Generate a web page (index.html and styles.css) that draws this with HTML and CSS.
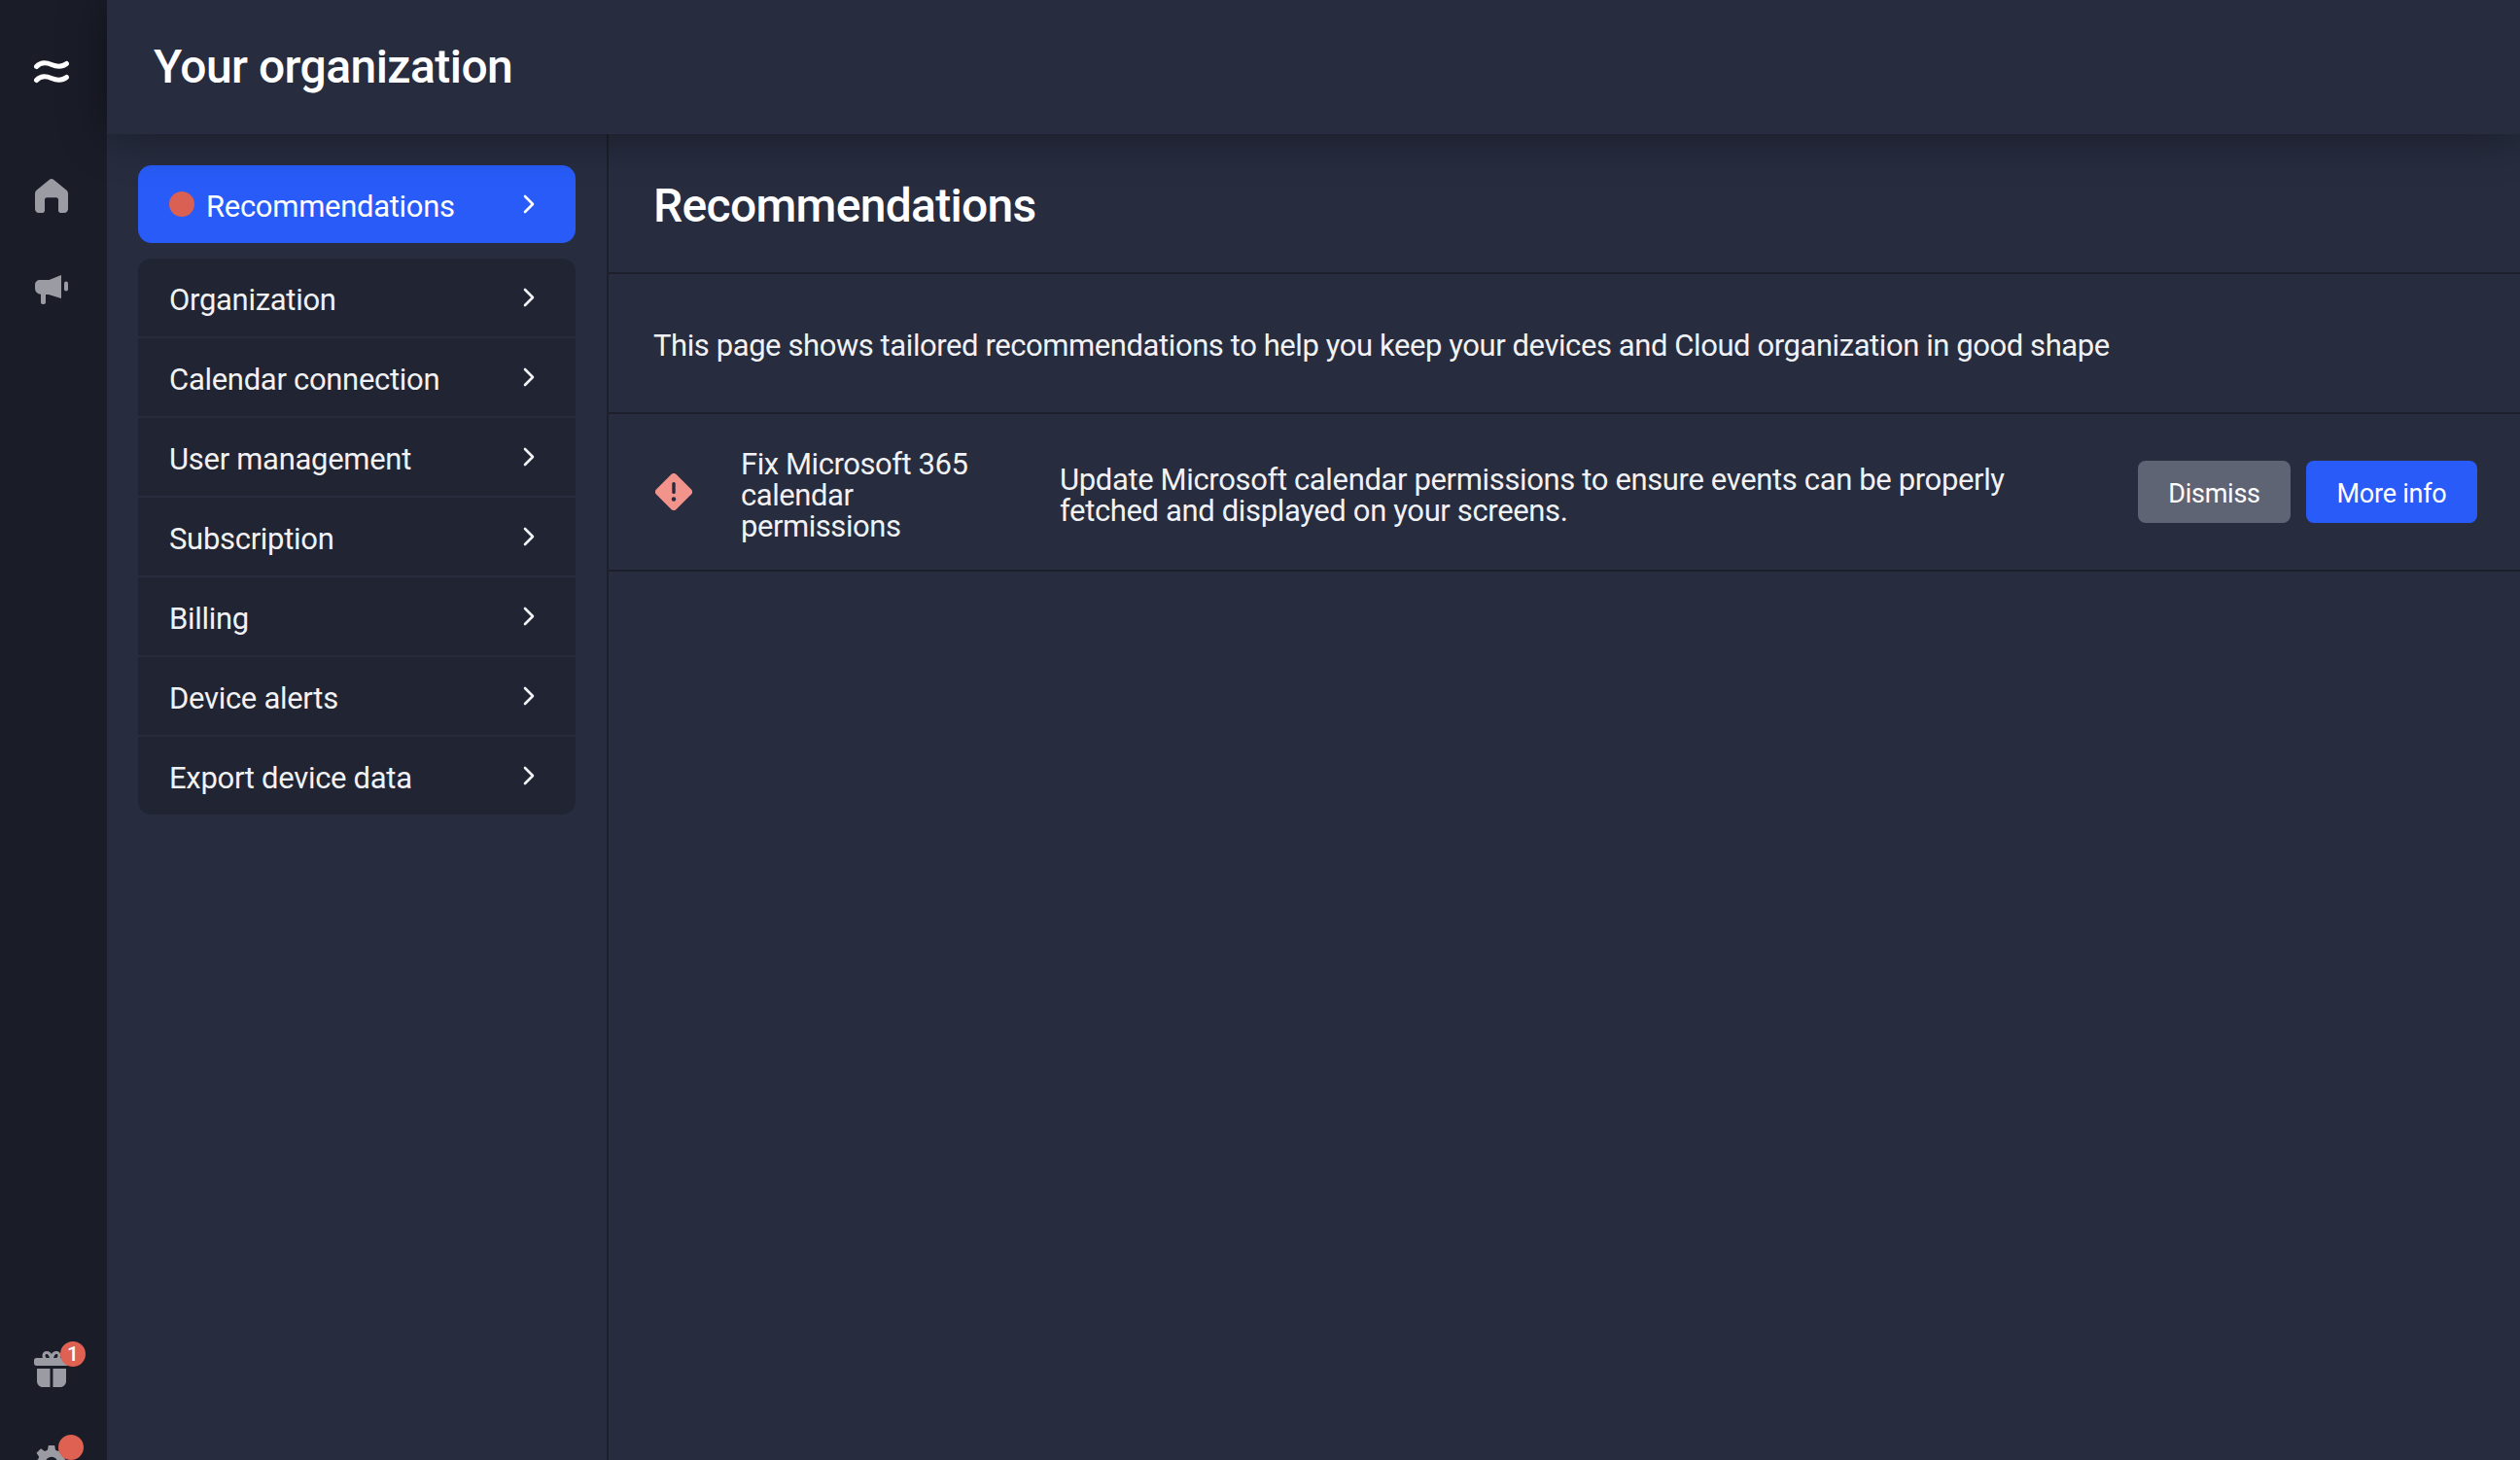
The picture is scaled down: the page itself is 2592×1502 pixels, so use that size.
FILE: index.html
```html
<!DOCTYPE html>
<html lang="en">
<head>
<meta charset="utf-8">
<title>Your organization</title>
<link rel="stylesheet" href="styles.css">
</head>
<body>
<div class="app">
  <aside class="rail">
    <div class="rail-top">
      <svg class="logo" viewBox="0 0 36 24" width="36" height="24"><path d="M2.500 6.500C7 1.500 12 2 18 4.500S29 7 33.500 3.500M2.500 20.500C7 15.500 12 16 18 18.500S29 21 33.500 17.500" fill="none" stroke="#fff" stroke-width="5" stroke-linecap="round"/></svg>
      <svg class="rail-home" viewBox="0 0 34 35" width="34" height="35"><path fill-rule="evenodd" d="M17 0c.9 0 1.700.4 2.400 1l12.800 10.600c1.200 1 1.800 2.300 1.800 3.900V31c0 2.200-1.600 4-3.800 4h-4c-1.200 0-2.200-1-2.200-2.200V21.500c0-1.200-.9-2.200-2.100-2.200h-9.800c-1.200 0-2.100 1-2.100 2.200v11.300c0 1.200-1 2.200-2.200 2.200h-4C1.600 35 0 33.200 0 31V15.500c0-1.600.6-2.900 1.800-3.900L14.600 1C15.300.4 16.100 0 17 0z" fill="#9b9ca3"/></svg>
      <svg class="rail-mega" viewBox="0 0 34 30" width="34" height="30"><path d="M27 0v24l-13-4h-3v8c0 1.200-.9 2-2 2H8c-1.100 0-2-.8-2-2v-8.200C2.500 19.500 0 17 0 13.500V10C0 7 2.400 5 5 5h9.500L25 .8C26 .3 27 0 27 0z" fill="#9b9ca3"/><rect x="30" y="6.500" width="4" height="10" rx="2" fill="#9b9ca3"/></svg>
    </div>
    <div class="rail-bottom">
      <div class="rail-badged rail-gift">
        <svg viewBox="0 0 36 37" width="36" height="37"><path fill-rule="evenodd" d="M2.500 7H9a5 5 0 0 1-.5-2.500C8.500 2 10.500 0 13 0c2.200 0 4 1.200 5 3 1-1.800 2.800-3 5-3 2.500 0 4.500 2 4.500 4.500 0 1-.2 1.800-.5 2.500h6.500C35 7 36 8 36 9.500v3c0 1.400-1 2.500-2.500 2.500h-31C1 15 0 13.900 0 12.500v-3C0 8 1 7 2.500 7zM16 7l-1-2.500C14.600 3.600 13.800 3 13 3c-.9 0-1.500.7-1.500 1.500S12.100 7 13 7h3zm4 0h3c.9 0 1.500-1.600 1.500-2.500S23.900 3 23 3c-.8 0-1.600.6-2 1.500L20 7z" fill="#9b9ca3"/><path d="M3 18h13.500v19H9c-3.300 0-6-2.700-6-6V18zM19.500 18H33v13c0 3.300-2.700 6-6 6h-7.500V18z" fill="#9b9ca3"/></svg>
        <span class="badge">1</span>
      </div>
      <div class="rail-badged rail-gear">
        <svg viewBox="0 0 40 40" width="36" height="36"><path fill-rule="evenodd" d="M16.500 0h7l1 5.200 3.300 1.400 4.400-3 5 5-3 4.400 1.400 3.300 5 .9v7l-5 1-1.400 3.300 3 4.400-5 5-4.400-3-3.300 1.400-1 5.200h-7l-1-5.200-3.300-1.400-4.400 3-5-5 3-4.400-1.400-3.300-5-1v-7l5-.9 1.400-3.300-3-4.400 5-5 4.400 3 3.300-1.400zM20 13a7 7 0 1 0 0 14 7 7 0 0 0 0-14z" fill="#9b9ca3"/></svg>
        <span class="badge"></span>
      </div>
    </div>
  </aside>
  <div class="workspace">
    <header class="topbar"><h1>Your organization</h1></header>
    <div class="columns">
      <nav class="nav">
        <a class="nav-active">
          <span class="dot"></span><span class="nav-label">Recommendations</span>
          <svg class="chev" viewBox="0 0 12 20" width="12" height="20"><path d="M2 2l8 8-8 8" fill="none" stroke="currentColor" stroke-width="2.600" stroke-linecap="round" stroke-linejoin="round"/></svg>
        </a>
        <div class="nav-group">
          <a class="nav-row"><span class="nav-label">Organization</span><svg class="chev" viewBox="0 0 12 20" width="12" height="20"><path d="M2 2l8 8-8 8" fill="none" stroke="currentColor" stroke-width="2.600" stroke-linecap="round" stroke-linejoin="round"/></svg></a>
          <a class="nav-row"><span class="nav-label">Calendar connection</span><svg class="chev" viewBox="0 0 12 20" width="12" height="20"><path d="M2 2l8 8-8 8" fill="none" stroke="currentColor" stroke-width="2.600" stroke-linecap="round" stroke-linejoin="round"/></svg></a>
          <a class="nav-row"><span class="nav-label">User management</span><svg class="chev" viewBox="0 0 12 20" width="12" height="20"><path d="M2 2l8 8-8 8" fill="none" stroke="currentColor" stroke-width="2.600" stroke-linecap="round" stroke-linejoin="round"/></svg></a>
          <a class="nav-row"><span class="nav-label">Subscription</span><svg class="chev" viewBox="0 0 12 20" width="12" height="20"><path d="M2 2l8 8-8 8" fill="none" stroke="currentColor" stroke-width="2.600" stroke-linecap="round" stroke-linejoin="round"/></svg></a>
          <a class="nav-row"><span class="nav-label">Billing</span><svg class="chev" viewBox="0 0 12 20" width="12" height="20"><path d="M2 2l8 8-8 8" fill="none" stroke="currentColor" stroke-width="2.600" stroke-linecap="round" stroke-linejoin="round"/></svg></a>
          <a class="nav-row"><span class="nav-label">Device alerts</span><svg class="chev" viewBox="0 0 12 20" width="12" height="20"><path d="M2 2l8 8-8 8" fill="none" stroke="currentColor" stroke-width="2.600" stroke-linecap="round" stroke-linejoin="round"/></svg></a>
          <a class="nav-row"><span class="nav-label">Export device data</span><svg class="chev" viewBox="0 0 12 20" width="12" height="20"><path d="M2 2l8 8-8 8" fill="none" stroke="currentColor" stroke-width="2.600" stroke-linecap="round" stroke-linejoin="round"/></svg></a>
        </div>
      </nav>
      <main class="content">
        <section class="content-head"><h2>Recommendations</h2></section>
        <section class="content-intro"><p>This page shows tailored recommendations to help you keep your devices and Cloud organization in good shape</p></section>
        <section class="rec">
          <svg class="rec-icon" viewBox="0 0 38 38" width="38" height="38"><path d="M16.200 1.200a4 4 0 0 1 5.600 0l15 15a4 4 0 0 1 0 5.600l-15 15a4 4 0 0 1-5.600 0l-15-15a4 4 0 0 1 0-5.600z" fill="#f2938c"/><rect x="17.300" y="9" width="3.400" height="12" rx="1.500" fill="#272c3f"/><circle cx="19" cy="26.500" r="2.200" fill="#272c3f"/></svg>
          <div class="rec-title">Fix Microsoft 365 calendar permissions</div>
          <div class="rec-desc">Update Microsoft calendar permissions to ensure events can be properly fetched and displayed on your screens.</div>
          <div class="rec-actions">
            <button class="btn btn-muted">Dismiss</button>
            <button class="btn btn-primary">More info</button>
          </div>
        </section>
      </main>
    </div>
  </div>
</div>
</body>
</html>
```
FILE: styles.css
```css
* { box-sizing: border-box; }
html, body { margin: 0; height: 100%; overflow: hidden; }
body {
  background: #272c3f;
  color: #f1f2f5;
  font-family: Roboto, "Liberation Sans", sans-serif;
  font-size: 31px;
}
.app { display: flex; height: 1502px; }

.rail {
  width: 110px;
  flex: none;
  height: 1523px;
  padding-right: 4px;
  background: #1a1c28;
  display: flex;
  flex-direction: column;
  justify-content: space-between;
  align-items: center;
}
.rail-top { display: flex; flex-direction: column; align-items: center; }
.logo { margin-top: 62px; }
.rail-home { margin-top: 98px; }
.rail-mega { margin-top: 64px; }
.rail-bottom { display: flex; flex-direction: column; align-items: center; }
.rail-badged { position: relative; display: flex; }
.rail-gear { margin-top: 60px; }
.badge {
  position: absolute;
  top: -10px;
  right: -17px;
  width: 26px;
  height: 26px;
  border-radius: 50%;
  background: #de6151;
  color: #fff;
  font-size: 21px;
  line-height: 26px;
  text-align: center;
  font-weight: 500;
}
.rail-gear .badge { top: -11px; right: -15px; }

.workspace { flex: 1; min-width: 0; display: flex; flex-direction: column; }
.topbar {
  height: 138px;
  flex: none;
  padding-left: 48px;
  display: flex;
  align-items: center;
  background: #272c3f;
  box-shadow: 0 0 44px rgba(0, 0, 0, .42);
  position: relative;
  z-index: 1;
}
h1 { margin: 0 0 2px; font-size: 48px; font-weight: 500; letter-spacing: -.55px; color: #fff; }

.columns { flex: 1; display: flex; min-height: 0; }
.nav {
  width: 516px;
  flex: none;
  padding: 32px 32px 0;
  border-right: 2px solid #1d202c;
  display: flex;
  flex-direction: column;
  gap: 16px;
}
.nav-active, .nav-row {
  display: flex;
  align-items: center;
  height: 80px;
  padding: 0 44px 0 32px;
}
.nav-active { background: #285bf8; border-radius: 14px; color: #fff; }
.dot { width: 26px; height: 26px; border-radius: 50%; background: #d96052; margin-right: 12px; flex: none; }
.nav-label { flex: 1; letter-spacing: -.3px; margin-top: 4px; }
.chev { flex: none; margin-right: -2px; }
.nav-group { background: #212433; border-radius: 14px; overflow: hidden; }
.nav-row { height: 82px; border-bottom: 2px solid #272c3f; }
.nav-row:last-child { height: 80px; border-bottom: 0; }

.content { flex: 1; min-width: 0; }
.content-head {
  height: 144px;
  padding-left: 46px;
  display: flex;
  align-items: center;
  border-bottom: 2px solid #1d202c;
}
h2 { margin: 5px 0 0; font-size: 48px; font-weight: 500; letter-spacing: -.7px; color: #fff; }
.content-intro {
  height: 144px;
  padding: 0 46px;
  display: flex;
  align-items: center;
  border-bottom: 2px solid #1d202c;
}
.content-intro p { margin: 4px 0 0; letter-spacing: -.42px; }
.rec {
  height: 162px;
  padding: 0 44px 0 46px;
  display: grid;
  grid-template-columns: 42px 280px 1fr auto;
  column-gap: 48px;
  align-items: center;
  border-bottom: 2px solid #1d202c;
}
.rec-icon { margin-left: 2px; }
.rec-title, .rec-desc { line-height: 32px; padding-top: 7px; letter-spacing: -.36px; }
.rec-title { letter-spacing: -.45px; }
.rec-desc { max-width: 1000px; }
.rec-actions { display: flex; gap: 16px; margin-left: -100px; }
.btn {
  height: 64px;
  border: 0;
  border-radius: 8px;
  color: #fff;
  padding: 3px 0 0;
  font: 400 27px Roboto, "Liberation Sans", sans-serif;
  letter-spacing: -.25px;
}
.btn-muted { background: #5f6475; width: 157px; }
.btn-primary { background: #285bf8; width: 176px; }
```
